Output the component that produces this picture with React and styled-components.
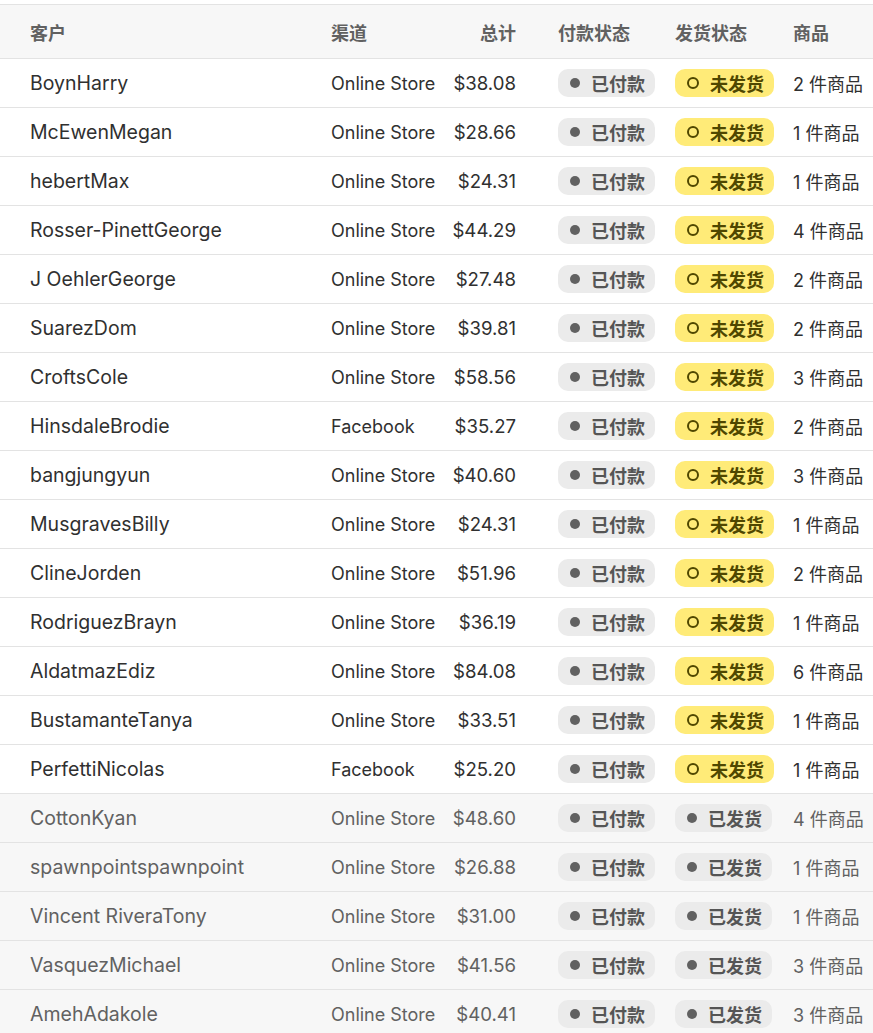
import React from 'react'
import styled, { createGlobalStyle } from 'styled-components'

const GlobalStyle = createGlobalStyle`
    html, body {
        margin: 0;
        padding: 0;
        background: #ffffff;
    }
    body {
        font-family: Inter, "Noto Sans CJK SC", "Noto Sans", sans-serif;
        -webkit-font-smoothing: antialiased;
    }
`

const orders = [
    { name: 'BoynHarry', channel: 'Online Store', total: '$38.08', items: 2, shipped: false },
    { name: 'McEwenMegan', channel: 'Online Store', total: '$28.66', items: 1, shipped: false },
    { name: 'hebertMax', channel: 'Online Store', total: '$24.31', items: 1, shipped: false },
    { name: 'Rosser-PinettGeorge', channel: 'Online Store', total: '$44.29', items: 4, shipped: false },
    { name: 'J OehlerGeorge', channel: 'Online Store', total: '$27.48', items: 2, shipped: false },
    { name: 'SuarezDom', channel: 'Online Store', total: '$39.81', items: 2, shipped: false },
    { name: 'CroftsCole', channel: 'Online Store', total: '$58.56', items: 3, shipped: false },
    { name: 'HinsdaleBrodie', channel: 'Facebook', total: '$35.27', items: 2, shipped: false },
    { name: 'bangjungyun', channel: 'Online Store', total: '$40.60', items: 3, shipped: false },
    { name: 'MusgravesBilly', channel: 'Online Store', total: '$24.31', items: 1, shipped: false },
    { name: 'ClineJorden', channel: 'Online Store', total: '$51.96', items: 2, shipped: false },
    { name: 'RodriguezBrayn', channel: 'Online Store', total: '$36.19', items: 1, shipped: false },
    { name: 'AldatmazEdiz', channel: 'Online Store', total: '$84.08', items: 6, shipped: false },
    { name: 'BustamanteTanya', channel: 'Online Store', total: '$33.51', items: 1, shipped: false },
    { name: 'PerfettiNicolas', channel: 'Facebook', total: '$25.20', items: 1, shipped: false },
    { name: 'CottonKyan', channel: 'Online Store', total: '$48.60', items: 4, shipped: true },
    { name: 'spawnpointspawnpoint', channel: 'Online Store', total: '$26.88', items: 1, shipped: true },
    { name: 'Vincent RiveraTony', channel: 'Online Store', total: '$31.00', items: 1, shipped: true },
    { name: 'VasquezMichael', channel: 'Online Store', total: '$41.56', items: 3, shipped: true },
    { name: 'AmehAdakole', channel: 'Online Store', total: '$40.41', items: 3, shipped: true },
]

const Badge = ({ tone, children }) => (
    <Pill tone={tone}>
        {tone === 'warning' ? <Ring /> : <Dot />}
        {children}
    </Pill>
)

export default function App() {
    return (
        <Page>
            <GlobalStyle />
            <Table>
                <HeadRow>
                    <Cell>客户</Cell>
                    <Cell>渠道</Cell>
                    <Cell align="right">总计</Cell>
                    <Cell pad>付款状态</Cell>
                    <Cell>发货状态</Cell>
                    <Cell>商品</Cell>
                </HeadRow>
                {orders.map((o, i) => (
                    <Row key={i} muted={o.shipped}>
                        <Cell size="19.5px">{o.name}</Cell>
                        <Cell size="18px">{o.channel}</Cell>
                        <Cell size="18.6px" align="right">{o.total}</Cell>
                        <Cell pad><Badge>已付款</Badge></Cell>
                        <Cell>
                            {o.shipped
                                ? <Badge>已发货</Badge>
                                : <Badge tone="warning">未发货</Badge>}
                        </Cell>
                        <Cell size="18px">{o.items} 件商品</Cell>
                    </Row>
                ))}
            </Table>
        </Page>
    )
}

const Page = styled.div`
    padding-top: 4px;
    height: 1033px;
    overflow: hidden;
`

const Table = styled.div`
    border-top: 1px solid #e3e3e3;
`

const RowBase = styled.div`
    display: grid;
    grid-template-columns: 301px 110px 75px 159px 118px 1fr;
    align-items: center;
    padding-left: 30px;
    border-bottom: 1px solid #e3e3e3;
    white-space: nowrap;
`

const HeadRow = styled(RowBase)`
    height: 53px;
    background: #f7f7f7;
    color: #616161;
    font-size: 18px;
    font-weight: 650;
`

const Row = styled(RowBase)`
    height: 48px;
    background: ${p => (p.muted ? '#f7f7f7' : '#ffffff')};
    color: ${p => (p.muted ? '#616161' : '#303030')};
`

const Cell = styled.div`
    font-size: ${p => p.size || 'inherit'};
    text-align: ${p => p.align || 'left'};
    padding-left: ${p => (p.pad ? '42px' : '0')};
    overflow: hidden;
`

const Pill = styled.span`
    display: inline-flex;
    align-items: center;
    gap: 11px;
    height: 28px;
    box-sizing: border-box;
    padding: 0 10px 0 12px;
    border-radius: 10px;
    font-size: 18px;
    font-weight: 700;
    background: ${p => (p.tone === 'warning' ? '#ffeb78' : '#ebebeb')};
    color: ${p => (p.tone === 'warning' ? '#4f4700' : '#555555')};
`

const Dot = styled.span`
    width: 10px;
    height: 10px;
    border-radius: 50%;
    background: #616161;
`

const Ring = styled.span`
    width: 8px;
    height: 8px;
    border-radius: 50%;
    border: 2px solid #4f4700;
`
